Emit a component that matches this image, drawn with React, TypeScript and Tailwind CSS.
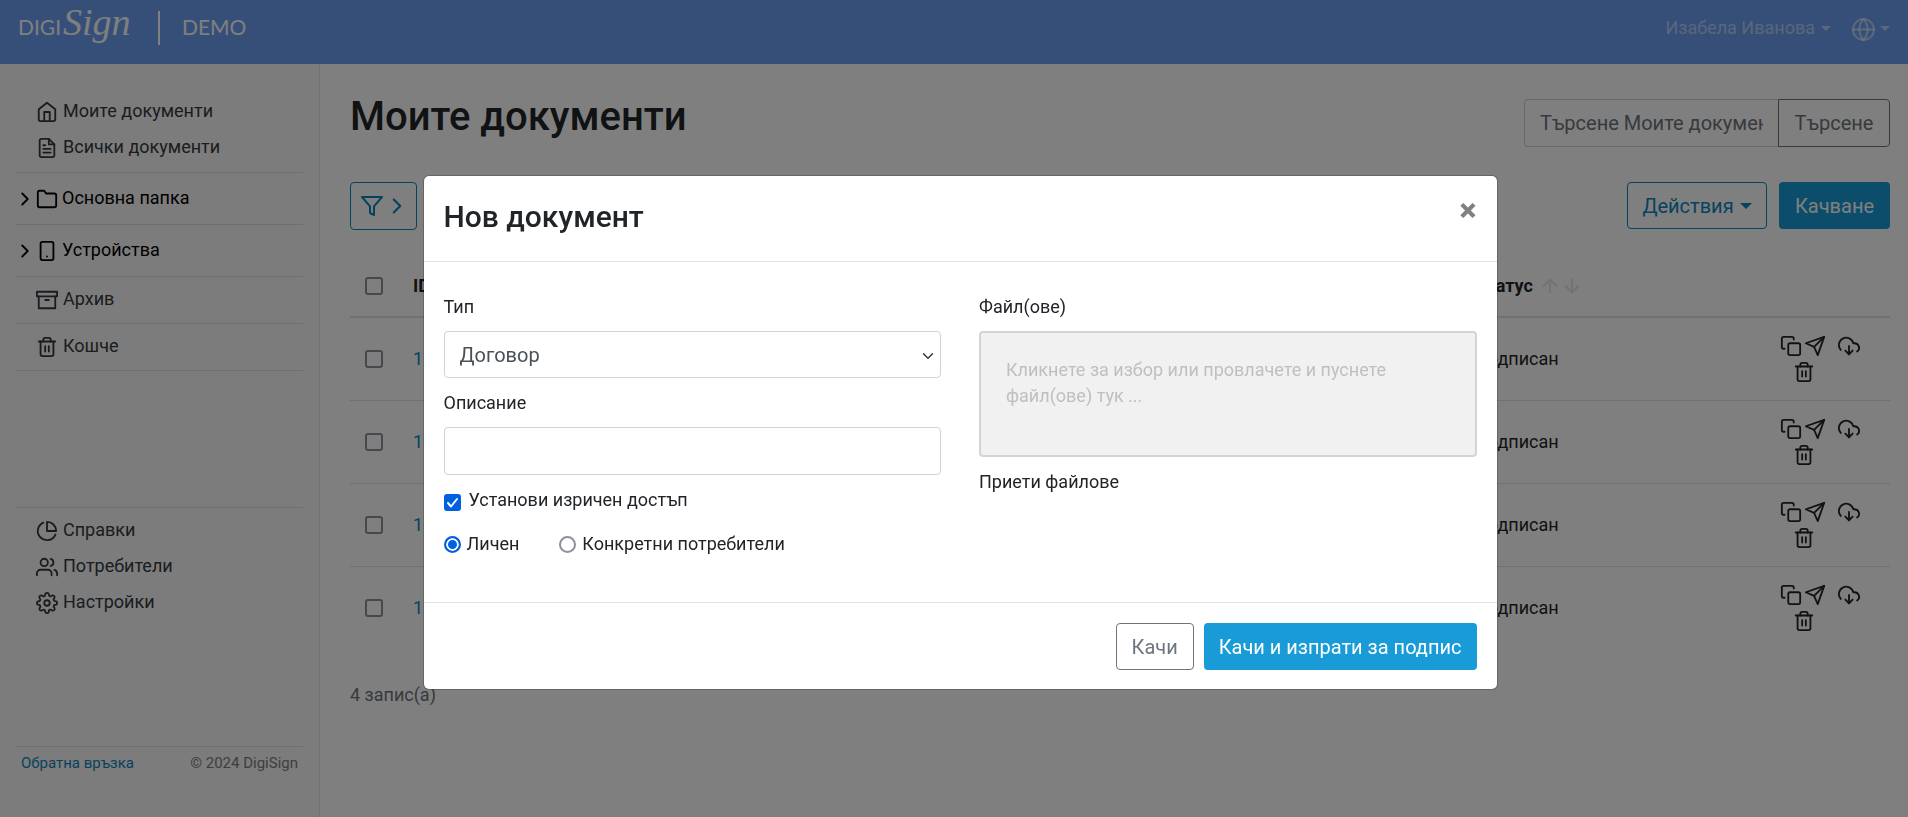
import { useState } from "react";
import type { ReactNode } from "react";
import type { IconType } from "react-icons";
import {
  FiArchive,
  FiArrowDown,
  FiArrowUp,
  FiChevronDown,
  FiChevronRight,
  FiCopy,
  FiDownloadCloud,
  FiFileText,
  FiFilter,
  FiFolder,
  FiGlobe,
  FiHome,
  FiPieChart,
  FiSend,
  FiSettings,
  FiSmartphone,
  FiTrash2,
  FiUsers,
} from "react-icons/fi";

const rows = [1, 2, 3, 4];

function Caret() {
  return (
    <span className="inline-block border-x-[5px] border-t-[5px] border-x-transparent border-t-current" />
  );
}

function Checkbox({ label }: { label: string }) {
  return (
    <input
      type="checkbox"
      aria-label={label}
      className="block size-[18px] appearance-none rounded-[3px] border-2 border-[#8f8f9d] bg-white"
    />
  );
}

function NavItem({ icon: Icon, label }: { icon: IconType; label: string }) {
  return (
    <a
      href="#"
      className="flex h-9 items-center gap-[5px] pl-5 text-[#343a40]"
    >
      <Icon className="mt-0.5 size-[22px]" />
      {label}
    </a>
  );
}

function NavFolder({ icon: Icon, label }: { icon: IconType; label: string }) {
  return (
    <button className="flex h-[51px] w-full items-center pb-0.5 text-black">
      <FiChevronRight className="mt-0.5 -ml-0.5 size-[22px]" />
      <Icon className="mt-0.5 mr-1 size-[22px]" />
      {label}
    </button>
  );
}

function NavGroup({ children }: { children: ReactNode }) {
  return <div className="border-t border-black/10">{children}</div>;
}

function Header() {
  return (
    <header className="flex h-16 items-center justify-between bg-[#6c9ef0] pr-[18px] pl-[18px]">
      <a href="#" className="flex items-center text-white">
        <svg
          width="118"
          height="64"
          viewBox="0 0 118 64"
          role="img"
          aria-label="DigiSign"
          fill="currentColor"
        >
          <text x="0" y="35" fontFamily="Lato, sans-serif" fontSize="21">
            DIGI
          </text>
          <text
            x="45"
            y="35"
            fontFamily="'Liberation Serif', serif"
            fontStyle="italic"
            fontSize="38"
          >
            Sign
          </text>
        </svg>
        <span className="ml-[22px] h-[34px] w-0.5 -translate-y-1 bg-white" />
        <span className="ml-[22px] pb-2.5 font-[Lato] text-[21px]">DEMO</span>
      </a>
      <div className="flex items-center pb-2 text-white/50">
        <button className="flex items-center gap-1.5">
          Изабела Иванова <Caret />
        </button>
        <button aria-label="Език" className="ml-5 flex items-center gap-1">
          <FiGlobe className="mt-0.5 size-[25px]" />
          <Caret />
        </button>
      </div>
    </header>
  );
}

function Sidebar() {
  return (
    <aside className="flex w-80 shrink-0 flex-col border-r border-[#e2e2e2] bg-[#f8f8f8] px-4">
      <nav className="pt-[29px]">
        <div className="pb-[7px]">
          <NavItem icon={FiHome} label="Моите документи" />
          <NavItem icon={FiFileText} label="Всички документи" />
        </div>
        <NavGroup>
          <NavFolder icon={FiFolder} label="Основна папка" />
        </NavGroup>
        <NavGroup>
          <NavFolder icon={FiSmartphone} label="Устройства" />
        </NavGroup>
        <NavGroup>
          <div className="pt-1 pb-1.5">
            <NavItem icon={FiArchive} label="Архив" />
          </div>
        </NavGroup>
        <div className="border-y border-black/10 pt-1 pb-1.5">
          <NavItem icon={FiTrash2} label="Кошче" />
        </div>
        <div className="mt-[136px] border-t border-black/10 pt-1">
          <NavItem icon={FiPieChart} label="Справки" />
          <NavItem icon={FiUsers} label="Потребители" />
          <NavItem icon={FiSettings} label="Настройки" />
        </div>
      </nav>
      <div className="mt-auto flex h-[71px] justify-between border-t border-black/10 px-[5px] pt-[3px] text-[15px]">
        <a href="#" className="text-[#0d85bd]">
          Обратна връзка
        </a>
        <span className="text-[#7d7d7d]">© 2024 DigiSign</span>
      </div>
    </aside>
  );
}

function RowActions() {
  return (
    <div className="flex flex-col gap-1">
      <div className="flex gap-0.5">
        <button aria-label="Копиране">
          <FiCopy className="size-[22px]" />
        </button>
        <button aria-label="Изпращане">
          <FiSend className="size-[22px]" />
        </button>
        <button aria-label="Изтегляне" className="ml-2.5">
          <FiDownloadCloud className="size-[22px]" />
        </button>
      </div>
      <button aria-label="Изтриване" className="ml-[13px] self-start">
        <FiTrash2 className="size-[22px]" />
      </button>
    </div>
  );
}

function Documents() {
  return (
    <main className="min-w-0 flex-1 bg-white pt-[35px] pr-[18px] pl-[30px]">
      <div className="flex items-start justify-between">
        <h1 className="text-[40px] leading-9 font-medium">Моите документи</h1>
        <form className="flex text-xl">
          <input
            type="text"
            aria-label="Търсене"
            placeholder="Търсене Моите документи"
            className="h-12 w-[254px] rounded-l border border-r-0 border-[#ced4da] px-[15px] placeholder:text-[#6c757d]"
          />
          <button
            type="button"
            className="h-12 w-28 rounded-r border border-[#6c757d] text-[#6c757d]"
          >
            Търсене
          </button>
        </form>
      </div>
      <div className="mt-[35px] flex justify-between text-xl">
        <button
          aria-label="Филтър"
          className="flex h-12 w-[67px] items-center rounded border border-[#0d85bd] pl-[9px] text-[#0d85bd]"
        >
          <FiFilter className="size-6" />
          <FiChevronRight className="size-[26px]" />
        </button>
        <div className="flex gap-3">
          <button className="flex h-[47px] w-[140px] items-center justify-center gap-1.5 rounded border border-[#0d85bd] text-[#0d85bd]">
            Действия
            <span className="border-x-[6px] border-t-[6px] border-x-transparent border-t-current" />
          </button>
          <button className="h-[47px] w-[111px] rounded bg-[#189bd6] text-white">
            Качване
          </button>
        </div>
      </div>
      <table className="mt-[26px] w-full table-fixed border-collapse text-left">
        <thead>
          <tr className="h-[61px] border-b-2 border-[#dee2e6]">
            <th className="w-[63px] pl-[15px]">
              <Checkbox label="Избор на всички" />
            </th>
            <th className="font-bold">ID</th>
            <th className="w-[305px] font-bold">
              <span className="flex items-center">
                Статус
                <FiArrowUp className="ml-1.5 size-[22px] text-[#dee2e6]" />
                <FiArrowDown className="size-[22px] text-[#dee2e6]" />
              </span>
            </th>
            <th className="w-[110px]" />
          </tr>
        </thead>
        <tbody>
          {rows.map((row) => (
            <tr
              key={row}
              className="h-[83px] border-b border-[#dee2e6] last:border-b-0"
            >
              <td className="pl-[15px]">
                <Checkbox label={"Избор на ред " + row} />
              </td>
              <td>
                <a href="#" className="text-[#0d85bd]">
                  1
                </a>
              </td>
              <td>Подписан</td>
              <td>
                <RowActions />
              </td>
            </tr>
          ))}
        </tbody>
      </table>
      <p className="mt-[33px] text-[#6c757d]">4 запис(а)</p>
    </main>
  );
}

function NewDocumentModal() {
  const [explicit, setExplicit] = useState(true);
  const [access, setAccess] = useState("personal");

  const radioClass =
    "size-[17px] appearance-none rounded-full border-2 border-[#8f8f9d] bg-white checked:border-[#0060df] checked:bg-[#0060df] checked:shadow-[inset_0_0_0_2px_white]";

  return (
    <div className="fixed inset-0 bg-black/50 pt-[175px] pl-3">
      <div
        role="dialog"
        aria-labelledby="modal-title"
        className="mx-auto w-full max-w-[1075px] rounded-md border border-black/20 bg-white bg-clip-padding"
      >
        <div className="flex h-[86px] items-start justify-between border-b border-[#dee2e6] px-5 pt-5">
          <h2 id="modal-title" className="text-[30px] leading-[42px] font-medium">
            Нов документ
          </h2>
          <button
            aria-label="Затваряне"
            className="text-[32px] leading-7 font-black text-[#808080]"
          >
            ×
          </button>
        </div>

        <div className="grid grid-cols-2 gap-[38px] px-5 pt-8 pb-[45px]">
          <div>
            <label htmlFor="type" className="block">
              Тип
            </label>
            <div className="relative mt-[11px]">
              <select
                id="type"
                className="h-[47px] w-full appearance-none rounded border border-[#ced4da] bg-white px-[15px] text-xl text-[#495057]"
              >
                <option>Договор</option>
              </select>
              <FiChevronDown className="pointer-events-none absolute top-4 right-1 size-[18px] text-[#343a40]" />
            </div>
            <label htmlFor="description" className="mt-3 block">
              Описание
            </label>
            <input
              id="description"
              type="text"
              className="mt-[11px] h-12 w-full rounded border border-[#ced4da] px-[15px] text-xl"
            />
            <label className="mt-3 flex items-center gap-2">
              <span className="relative mt-1 flex size-[17px]">
                <input
                  type="checkbox"
                  checked={explicit}
                  onChange={(e) => setExplicit(e.target.checked)}
                  className="size-[17px] appearance-none rounded-[3px] border-2 border-[#8f8f9d] checked:border-[#0060df] checked:bg-[#0060df]"
                />
                {explicit && (
                  <svg
                    viewBox="0 0 17 17"
                    className="pointer-events-none absolute inset-0 size-[17px]"
                    fill="none"
                    stroke="white"
                    strokeWidth="2"
                    strokeLinecap="round"
                    strokeLinejoin="round"
                  >
                    <path d="M4 9l3 3.5 6-7.5" />
                  </svg>
                )}
              </span>
              Установи изричен достъп
            </label>
            <div className="mt-[18px] flex gap-10">
              <label className="flex items-center gap-1.5">
                <input
                  type="radio"
                  name="access"
                  checked={access === "personal"}
                  onChange={() => setAccess("personal")}
                  className={radioClass}
                />
                Личен
              </label>
              <label className="flex items-center gap-1.5">
                <input
                  type="radio"
                  name="access"
                  checked={access === "specific"}
                  onChange={() => setAccess("specific")}
                  className={radioClass}
                />
                Конкретни потребители
              </label>
            </div>
          </div>

          <div>
            <p>Файл(ове)</p>
            <button className="mt-[11px] flex h-[126px] w-full items-start rounded border-2 border-[#d4d4d4] bg-[#f1f1f1] px-[25px] pt-6 text-left text-[#bfbfbf]">
              <span className="max-w-[400px]">
                Кликнете за избор или провлачете и пуснете файл(ове) тук ...
              </span>
            </button>
            <p className="mt-3">Приети файлове</p>
          </div>
        </div>

        <div className="flex justify-end gap-2.5 border-t border-[#dee2e6] px-5 pt-5 pb-[19px] text-xl">
          <button className="h-[47px] rounded border border-[#6c757d] px-[15px] text-[#6c757d]">
            Качи
          </button>
          <button className="h-[47px] rounded bg-[#189bd6] px-[15px] text-white">
            Качи и изпрати за подпис
          </button>
        </div>
      </div>
    </div>
  );
}

export default function App() {
  return (
    <div className="flex min-h-screen flex-col font-[Roboto,'Noto_Sans',sans-serif] text-[18px] leading-[26px] text-[#212529]">
      <Header />
      <div className="flex flex-1">
        <Sidebar />
        <Documents />
      </div>
      <NewDocumentModal />
    </div>
  );
}
